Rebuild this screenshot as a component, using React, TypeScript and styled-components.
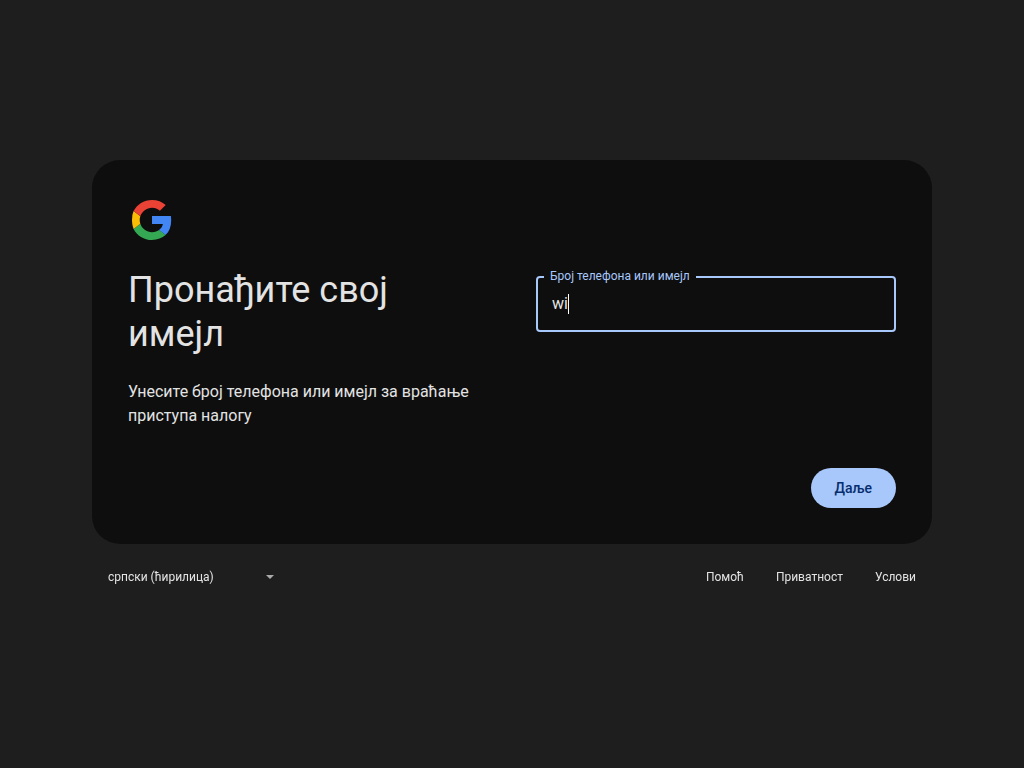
import React, { useState } from 'react';
import styled, { createGlobalStyle } from 'styled-components';

const GlobalStyle = createGlobalStyle`
  *, *::before, *::after { box-sizing: border-box; }
  body {
    margin: 0;
    background: #1e1e1e;
    color: #e3e3e3;
    font-family: Roboto, "Liberation Sans", sans-serif;
  }
`;

const Page = styled.div`
  min-height: 100vh;
  display: flex;
  flex-direction: column;
  align-items: center;
  justify-content: center;
  padding: 24px;
`;

const Shell = styled.div`
  width: 100%;
  max-width: 840px;
`;

const Card = styled.main`
  padding: 36px;
  border-radius: 28px;
  background: #0e0e0e;
`;

const Logo = styled.svg`
  display: block;
  width: 48px;
  height: 48px;
`;

const Columns = styled.div`
  display: grid;
  grid-template-columns: 1fr 1fr;
  gap: 48px;
  min-height: 240px;
  margin-top: 24px;

  @media (max-width: 720px) {
    grid-template-columns: 1fr;
  }
`;

const Title = styled.h1`
  margin: 0;
  font-size: 36px;
  font-weight: 400;
  line-height: 44px;
`;

const Subtitle = styled.p`
  margin: 24px 0 0;
  font-size: 16px;
  line-height: 24px;
`;

const Form = styled.form`
  display: flex;
  flex-direction: column;
  justify-content: space-between;
`;

const Field = styled.fieldset`
  min-width: 0;
  margin: 0;
  padding: 0 14px;
  border: 2px solid #a8c7fa;
  border-radius: 4px;
`;

const FieldLegend = styled.legend`
  margin-left: -8px;
  padding: 0 6px 2px;
  font-size: 12px;
  line-height: 16px;
  color: #a8c7fa;
`;

const InputRow = styled.label`
  display: flex;
  align-items: center;
  padding: 6px 0 14px;
  cursor: text;
`;

const TextInput = styled.input`
  field-sizing: content;
  min-width: 1px;
  max-width: 100%;
  height: 24px;
  padding: 0;
  border: 0;
  outline: 0;
  background: transparent;
  color: #e3e3e3;
  caret-color: transparent;
  font: 400 16px/24px Roboto, "Liberation Sans", sans-serif;
`;

const Caret = styled.span`
  width: 1px;
  height: 20px;
  background: #ffffff;
`;

const NextButton = styled.button`
  align-self: flex-end;
  height: 40px;
  padding: 0 24px;
  border: 0;
  border-radius: 20px;
  background: #a8c7fa;
  color: #062e6f;
  font: 500 14px/20px Roboto, "Liberation Sans", sans-serif;
  cursor: pointer;
`;

const Footer = styled.footer`
  display: flex;
  flex-wrap: wrap;
  align-items: center;
  justify-content: space-between;
  min-height: 64px;
  padding: 2px 16px 0;
  font-size: 12px;
  line-height: 16px;
`;

const LanguagePicker = styled.div`
  display: grid;
  align-items: center;
  width: 166px;

  > * { grid-area: 1 / 1; }
`;

const LanguageSelect = styled.select`
  appearance: none;
  width: 100%;
  height: 32px;
  padding: 0;
  border: 0;
  background: transparent;
  color: #e3e3e3;
  font: 400 12px/16px Roboto, "Liberation Sans", sans-serif;
`;

const Arrow = styled.svg`
  justify-self: end;
  width: 8px;
  height: 4px;
  pointer-events: none;
`;

const Links = styled.nav`
  display: flex;
  gap: 32px;
`;

const FooterLink = styled.a`
  color: #e3e3e3;
  text-decoration: none;
`;

const links = ['Помоћ', 'Приватност', 'Услови'];

export default function App() {
  const [identifier, setIdentifier] = useState('wi');

  return (
    <Page>
      <GlobalStyle />
      <Shell>
        <Card>
          <Logo viewBox="0 0 48 48" role="img" aria-label="Google">
            <path fill="#4285F4" d="M43.2 24.500c0-1.600-.1-3-.3-4.400H24v7.900h10.900c-.5 2.500-1.900 4.600-3.900 6l6.500 5.100c3.800-3.500 5.700-8.700 5.700-14.600z" />
            <path fill="#34A853" d="M24 44c5.500 0 10.200-1.800 13.600-4.900l-6.500-5c-1.700 1.200-4.100 2.100-7.100 2.100-5.400 0-10-3.600-11.700-8.500l-6.700 5.200C9 39.600 15.900 44 24 44z" />
            <path fill="#FBBC05" d="M12.300 27.700A12.300 12.300 0 0 1 11.700 24c0-1.300.2-2.600.6-3.700l-6.700-5.200A20 20 0 0 0 4 24c0 3.200.6 6.200 1.600 8.900l6.700-5.200z" />
            <path fill="#EA4335" d="M24 11.700c3.800 0 6.400 1.700 7.900 3l5.800-5.600C34.200 5.900 29.500 4 24 4 15.900 4 9 8.600 5.600 15.100l6.700 5.200C14 15.300 18.600 11.700 24 11.700z" />
          </Logo>
          <Columns>
            <header>
              <Title>Пронађите свој имејл</Title>
              <Subtitle>Унесите број телефона или имејл за враћање приступа налогу</Subtitle>
            </header>
            <Form onSubmit={(e) => e.preventDefault()}>
              <Field>
                <FieldLegend>
                  <label htmlFor="identifier">Број телефона или имејл</label>
                </FieldLegend>
                <InputRow htmlFor="identifier">
                  <TextInput
                    id="identifier"
                    type="text"
                    autoComplete="username"
                    autoFocus
                    value={identifier}
                    onChange={(e) => setIdentifier(e.target.value)}
                  />
                  <Caret />
                </InputRow>
              </Field>
              <NextButton type="submit">Даље</NextButton>
            </Form>
          </Columns>
        </Card>
        <Footer>
          <LanguagePicker>
            <LanguageSelect aria-label="Језик" defaultValue="sr">
              <option value="sr">српски (ћирилица)</option>
            </LanguageSelect>
            <Arrow viewBox="0 0 8 4" aria-hidden="true">
              <path d="M0 0h8L4 4z" fill="#ababab" />
            </Arrow>
          </LanguagePicker>
          <Links>
            {links.map((text) => (
              <FooterLink key={text} href="#">{text}</FooterLink>
            ))}
          </Links>
        </Footer>
      </Shell>
    </Page>
  );
}
